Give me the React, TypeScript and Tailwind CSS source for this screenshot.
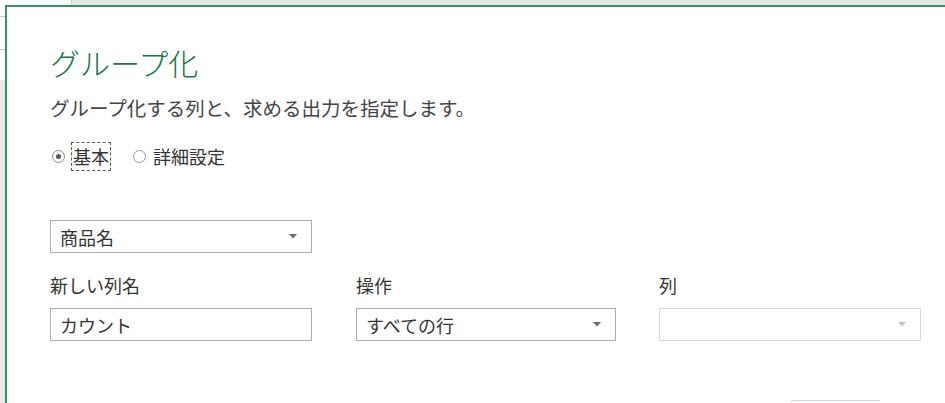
import React from "react";

const font = { fontFamily: '"Noto Sans CJK JP", "Noto Sans", sans-serif' };

function Arrow({ light }: { light?: boolean }) {
  return (
    <svg width="8" height="5" viewBox="0 0 8 5" className="shrink-0">
      <path d="M0 0 L8 0 L4 4.5 Z" fill={light ? "#c4c4c4" : "#6a6a6a"} />
    </svg>
  );
}

function Select({ value, width, disabled }: { value?: string; width: string; disabled?: boolean }) {
  return (
    <div
      className={`${width} h-[33px] flex items-center justify-between pl-[9px] pr-[14px] border ${
        disabled ? "border-[#dadada]" : "border-[#adadad]"
      } bg-white`}
    >
      <span className="text-[18px] leading-[24px] text-[#333]">{value}</span>
      <Arrow light={disabled} />
    </div>
  );
}

export default function App() {
  return (
    <div className="w-[945px] h-[403px] overflow-hidden bg-white flex flex-col" style={font}>
      <div className="h-[5px] flex shrink-0">
        <div className="w-[72px] bg-white border-r border-[#d0d0d0]" />
        <div className="flex-1 bg-[#e6e6e6]" />
      </div>
      <div className="flex flex-1 min-h-0">
        <div className="w-[5px] shrink-0 flex flex-col">
          <div className="h-[12px] bg-white border-b border-[#c8c8c8]" />
          <div className="h-[33px] bg-white border-b border-[#c8c8c8]" />
          <div className="h-[30px] bg-white" />
          <div className="flex-1 bg-[#e8e8e8]" />
        </div>
        <div className="flex-1 border-t-2 border-l-2 border-[#3f8f60] bg-white pl-[43px] pt-[37px]">
          <h1 className="text-[30px] leading-[36px] font-light text-[#217346]">グループ化</h1>
          <p className="mt-[16px] text-[19.5px] leading-[24px] text-[#444]">
            グループ化する列と、求める出力を指定します。
          </p>
          <div className="mt-[22px] flex items-center text-[18px] text-[#333]">
            <span className="w-[13px] h-[13px] rounded-full border border-[#8a8a8a] flex items-center justify-center ml-[2px]">
              <span className="w-[5px] h-[5px] rounded-full bg-[#555]" />
            </span>
            <span className="ml-[6px] leading-[27px] border border-dashed border-[#555] px-px">基本</span>
            <span className="ml-[22px] w-[13px] h-[13px] rounded-full border border-[#9a9a9a]" />
            <span className="ml-[7px] leading-[27px]">詳細設定</span>
          </div>
          <div className="mt-[49px]">
            <Select value="商品名" width="w-[262px]" />
          </div>
          <div className="mt-[20px] flex">
            <div className="w-[262px]">
              <div className="text-[18px] leading-[24px] text-[#333]">新しい列名</div>
              <div className="mt-[11px] w-[262px] h-[33px] flex items-center pl-[9px] border border-[#adadad]">
                <span className="text-[18px] leading-[24px] text-[#333]">カウント</span>
              </div>
            </div>
            <div className="w-[260px] ml-[44px]">
              <div className="text-[18px] leading-[24px] text-[#333]">操作</div>
              <div className="mt-[11px]">
                <Select value="すべての行" width="w-[260px]" />
              </div>
            </div>
            <div className="w-[262px] ml-[43px]">
              <div className="text-[18px] leading-[24px] text-[#333]">列</div>
              <div className="mt-[11px]">
                <Select width="w-[262px]" disabled />
              </div>
            </div>
          </div>
          <div className="mt-[59px] flex">
            <div className="ml-[741px] w-[89px] h-[30px] border-t border-[#c3e0d0] bg-white" />
          </div>
        </div>
      </div>
    </div>
  );
}
